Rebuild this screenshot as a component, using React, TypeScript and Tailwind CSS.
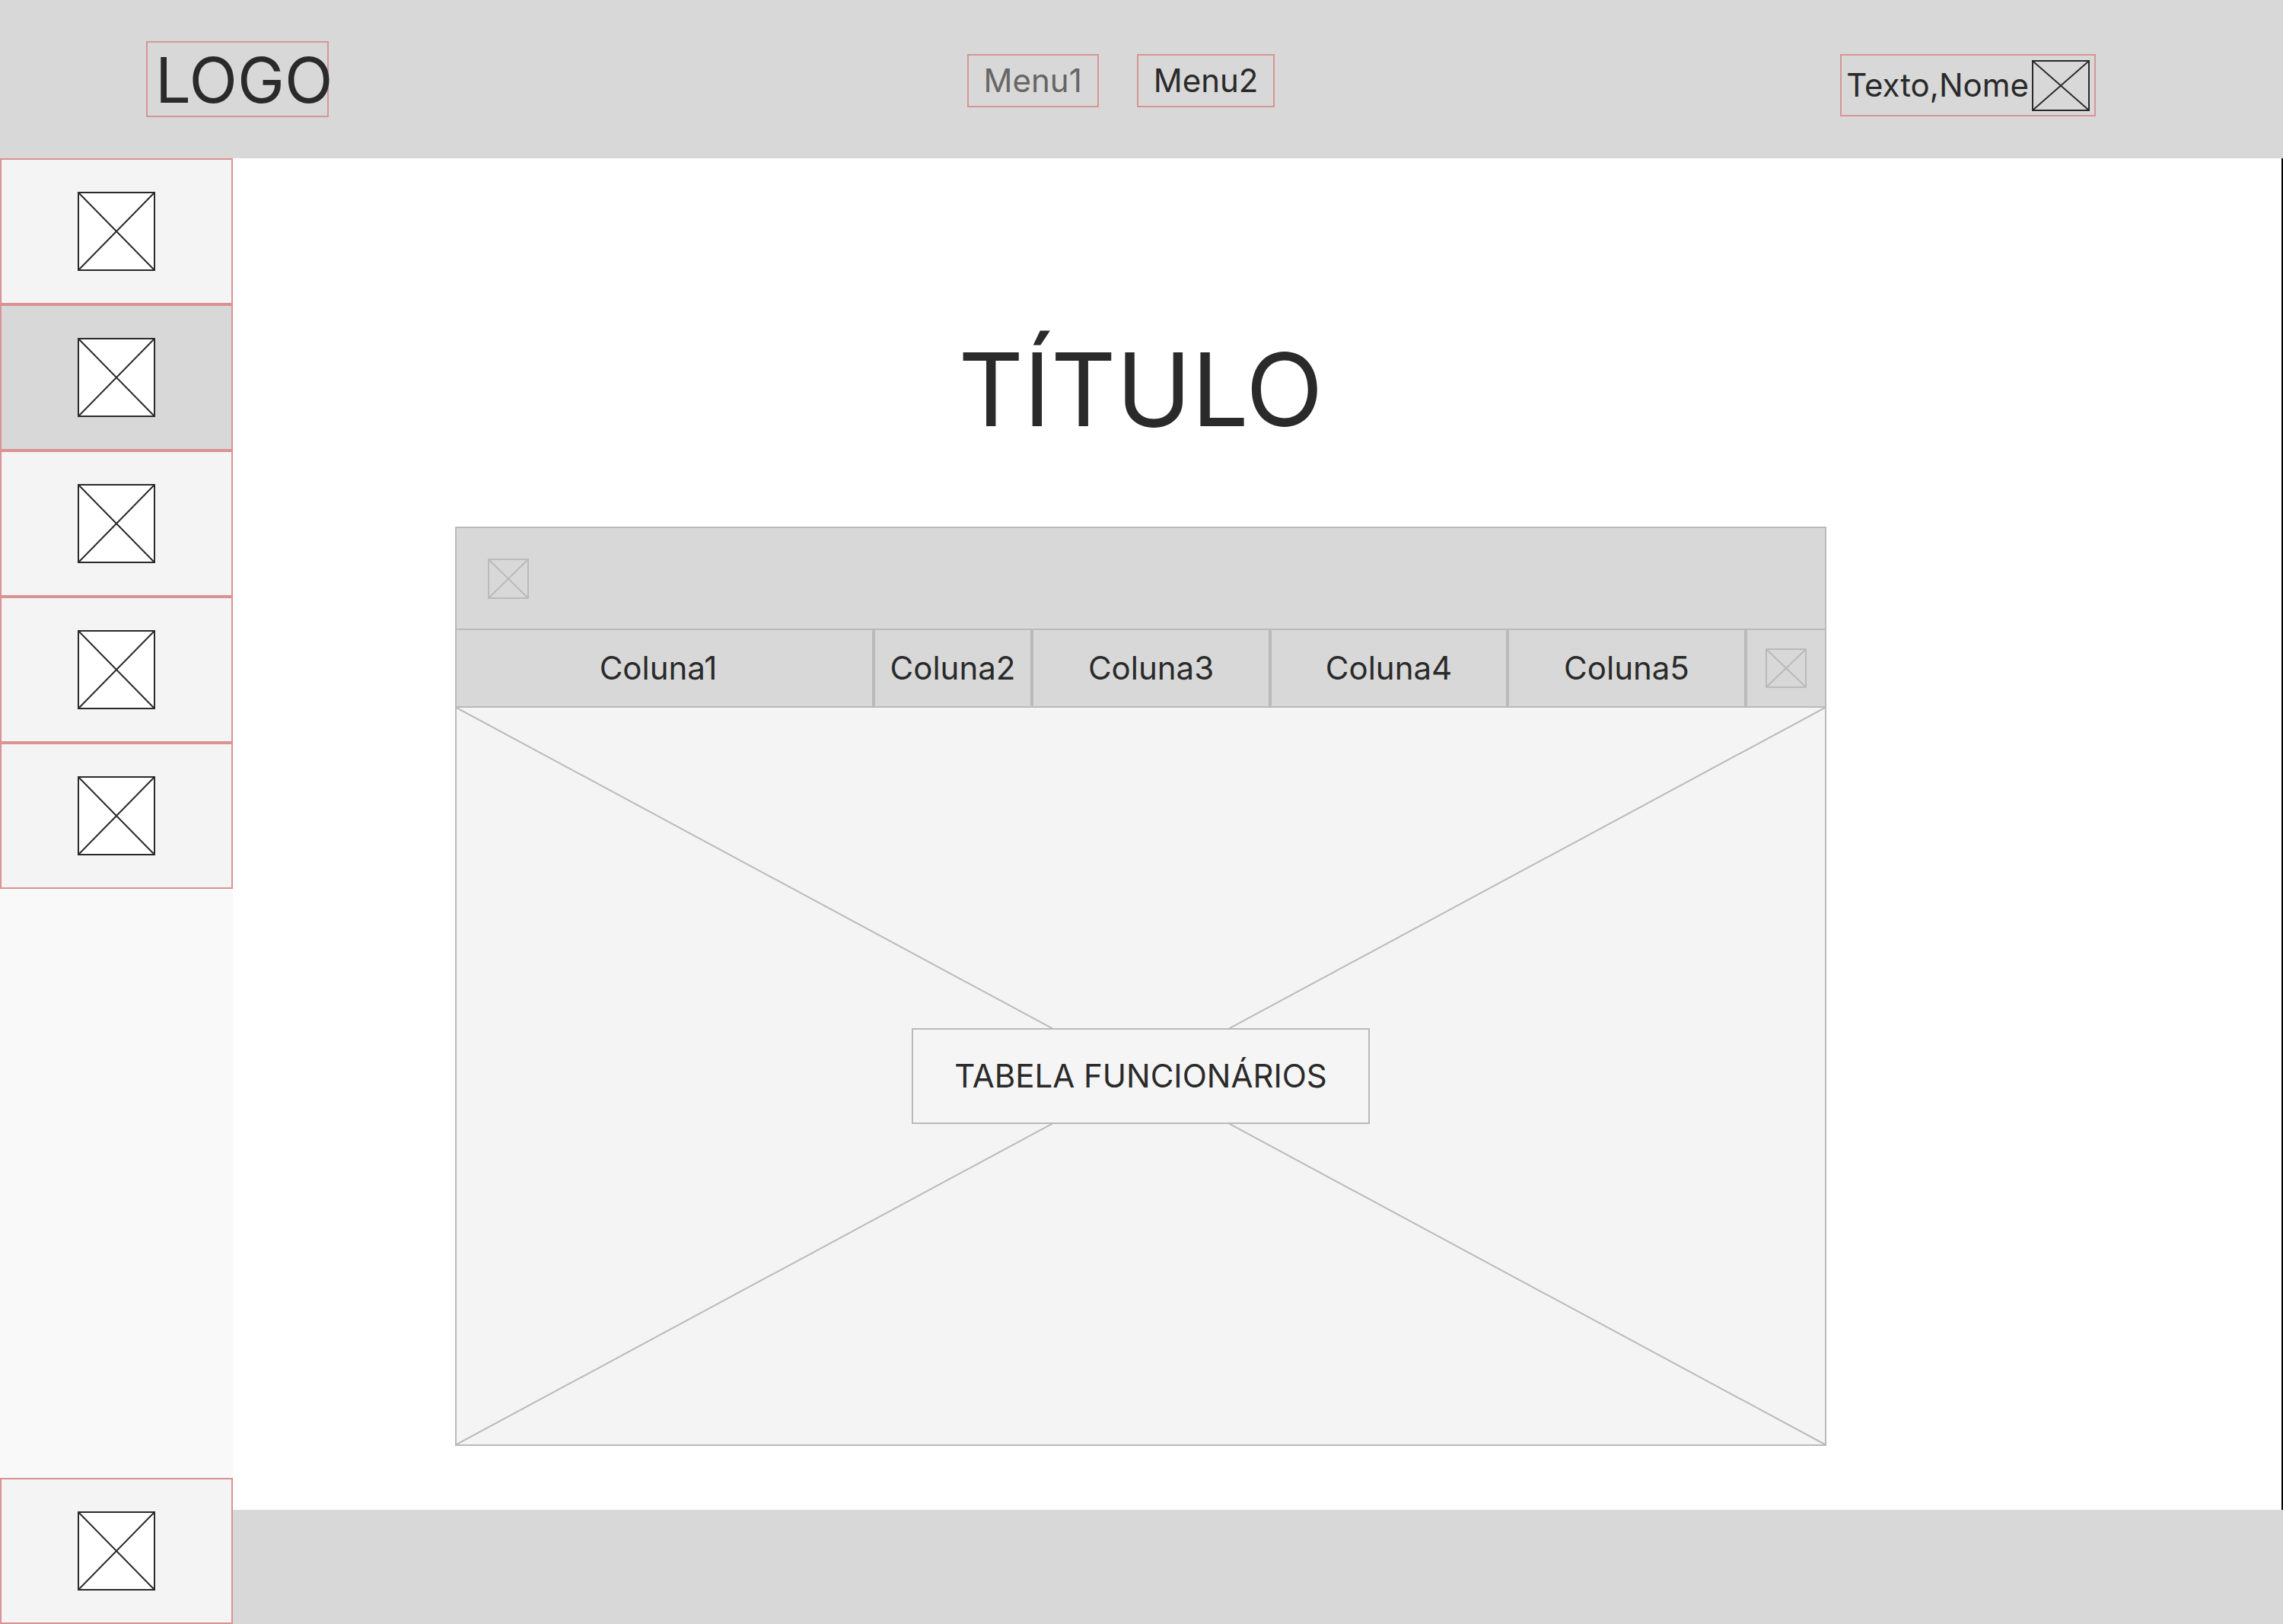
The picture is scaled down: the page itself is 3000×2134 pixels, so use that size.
type CrossBoxProps = { className: string };

/* Image placeholder: an outlined box crossed by its two diagonals. */
function CrossBox({ className }: CrossBoxProps) {
  return (
    <span aria-hidden="true" className={`block shrink-0 border-2 ${className}`}>
      <Diagonals />
    </span>
  );
}

function Diagonals() {
  return (
    <svg
      className="block h-full w-full"
      viewBox="0 0 100 100"
      preserveAspectRatio="none"
      fill="none"
      stroke="currentColor"
      strokeWidth="2"
    >
      <path d="M0 0L100 100M100 0L0 100" vectorEffect="non-scaling-stroke" />
    </svg>
  );
}

function SideButton({ label, active = false }: { label: string; active?: boolean }) {
  return (
    <button
      type="button"
      aria-label={label}
      className={`flex h-48 w-full items-center justify-center border-2 border-[#db9292] ${
        active ? "bg-[#d8d8d8]" : "bg-[#f4f4f4]"
      }`}
    >
      <CrossBox className="h-[104px] w-[102px] border-[#2a2a2a] bg-white text-[#2a2a2a]" />
    </button>
  );
}

const sideItems = ["Item 1", "Item 2", "Item 3", "Item 4", "Item 5"];

const columns = [
  { name: "Coluna1", cell: "w-[550px] pr-4" },
  { name: "Coluna2", cell: "w-[208px]" },
  { name: "Coluna3", cell: "w-[313px]" },
  { name: "Coluna4", cell: "w-[312px]" },
  { name: "Coluna5", cell: "w-[313px]" },
];

export default function App() {
  return (
    <div className="flex min-h-screen flex-col bg-white font-['Inter',sans-serif] text-[42px] leading-[50px] text-[#2a2a2a]">
      <header className="grid grid-cols-[1fr_auto_1fr] items-start bg-[#d8d8d8] py-[54px] pr-[246px] pl-48">
        <a
          href="#"
          className="flex h-[100px] w-60 items-center border-2 border-[#d59696] pt-0.5 pl-2.5 text-[83px] leading-[92px] whitespace-nowrap"
        >
          LOGO
        </a>
        <nav className="mt-[17px] flex gap-[50px]">
          <a href="#" className="border-2 border-[#d59696] px-5 py-2 text-[#666666]">
            Menu1
          </a>
          <a href="#" className="border-2 border-[#d59696] px-5 py-2">
            Menu2
          </a>
        </nav>
        <button
          type="button"
          className="mt-[17px] flex h-[82px] items-center gap-1 justify-self-end border-2 border-[#d59696] px-1.5"
        >
          <span>Texto,Nome</span>
          <CrossBox className="h-[67px] w-[76px] border-[#2a2a2a]" />
        </button>
      </header>

      <div className="flex flex-1">
        <aside className="flex w-[306px] shrink-0 flex-col justify-between bg-[#f9f9f9]">
          <nav>
            {sideItems.map((item, i) => (
              <SideButton key={item} label={item} active={i === 1} />
            ))}
          </nav>
          <SideButton label="Item 6" />
        </aside>

        <div className="flex flex-1 flex-col">
          <main className="flex flex-1 flex-col items-center border-r-2 border-black pt-56 pr-[306px] pb-[84px]">
            <h1 className="text-[133px] leading-[160px]">TÍTULO</h1>
            <table className="mt-[100px] w-full max-w-[1802px] flex-1 table-fixed border-separate border-spacing-0 text-center">
              <colgroup>
                {columns.map((c) => (
                  <col key={c.name} className={c.cell} />
                ))}
                <col className="w-[106px]" />
              </colgroup>
              <thead className="bg-[#d8d8d8]">
                <tr>
                  <td colSpan={6} className="h-[136px] border-2 border-[#bababa] p-0 pl-[41px]">
                    <button type="button" aria-label="Opções da tabela" className="flex">
                      <CrossBox className="h-[53px] w-[54px] border-[#bababa] text-[#bababa]" />
                    </button>
                  </td>
                </tr>
                <tr>
                  {columns.map((c) => (
                    <th
                      key={c.name}
                      scope="col"
                      className={`h-[102px] border-x-2 border-b-2 border-[#bababa] p-0 font-normal ${c.cell}`}
                    >
                      {c.name}
                    </th>
                  ))}
                  <th scope="col" className="h-[102px] border-x-2 border-b-2 border-[#bababa] p-0">
                    <button type="button" aria-label="Ações" className="mx-auto flex">
                      <CrossBox className="h-[52px] w-[54px] border-[#bababa] text-[#bababa]" />
                    </button>
                  </th>
                </tr>
              </thead>
              <tbody className="bg-[#f4f4f4]">
                <tr>
                  <td colSpan={6} className="h-[970px] border-x-2 border-b-2 border-[#bababa] p-0">
                    <div className="grid h-[968px] place-items-center text-[#bababa] *:col-start-1 *:row-start-1">
                      <Diagonals />
                      <span className="z-10 border-2 border-[#bababa] bg-[#f5f5f5] px-[54px] py-9 text-[#2a2a2a]">
                        TABELA FUNCIONÁRIOS
                      </span>
                    </div>
                  </td>
                </tr>
              </tbody>
            </table>
          </main>
          <footer className="h-[150px] bg-[#d8d8d8]" />
        </div>
      </div>
    </div>
  );
}
